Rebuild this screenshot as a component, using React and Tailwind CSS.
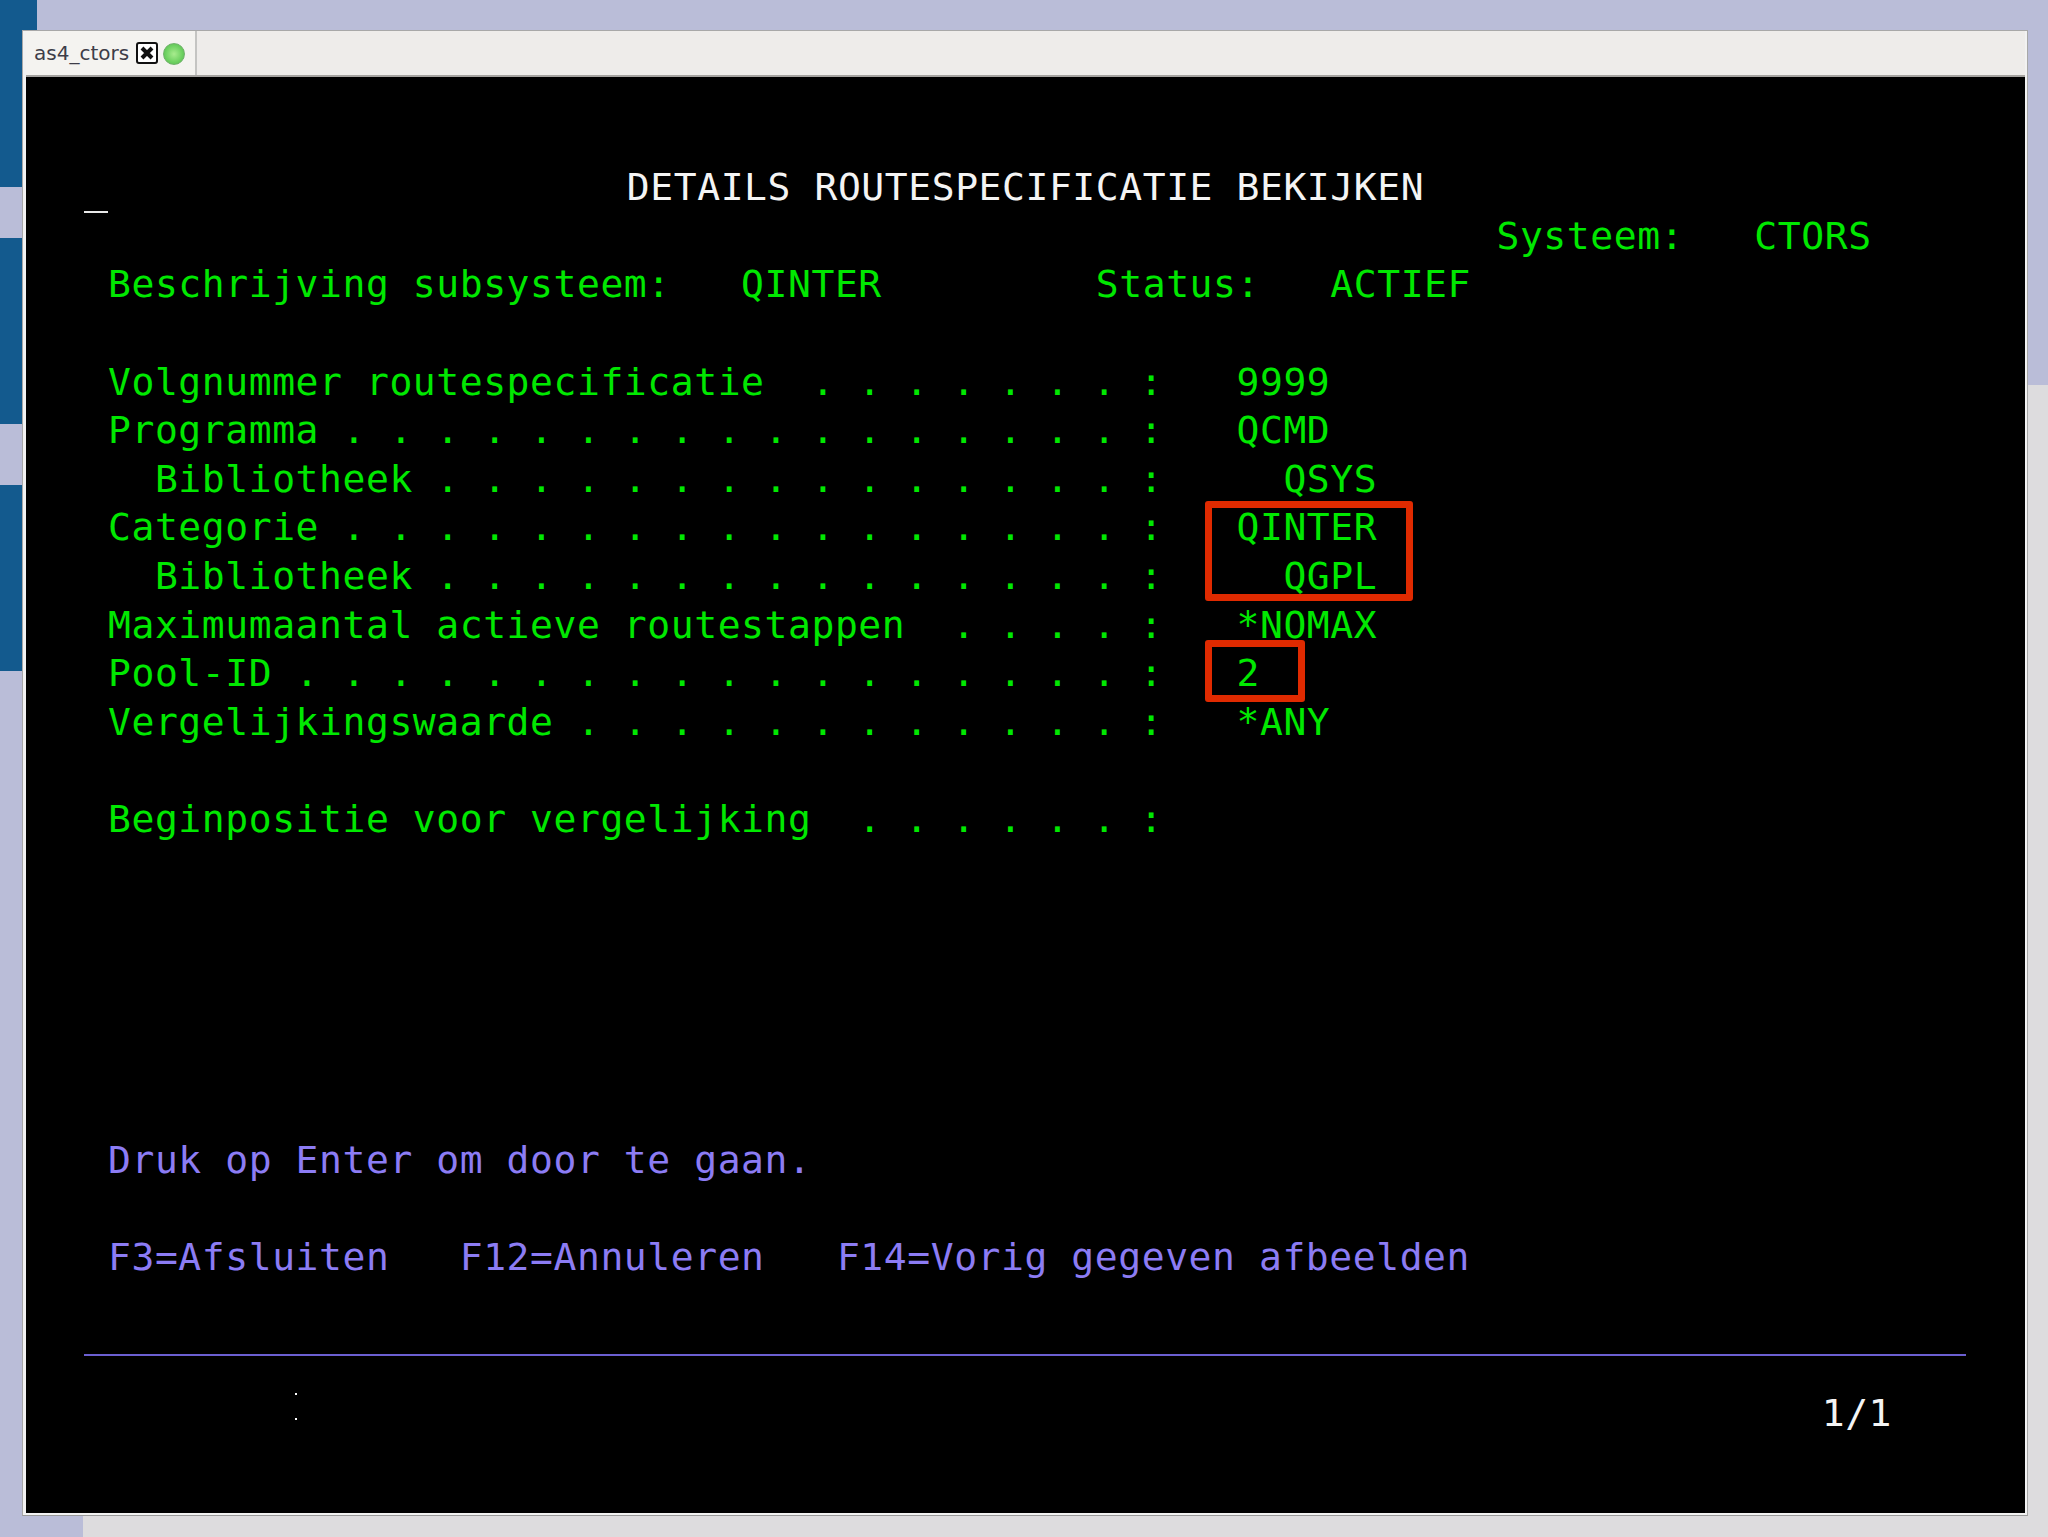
import React from 'react';

const green = 'text-[#00e800]';
const violet = 'text-[#8c7cf4]';
const value = 'ml-[3px]';

// the terminal is a character grid, so spaces do the columns
const rows = [
    { text: '                      ', tail: 'DETAILS ROUTESPECIFICATIE BEKIJKEN', shift: value, color: 'text-[#f4f4f4]' },
    { text: '                                                           ', tail: 'Systeem:   CTORS', shift: 'ml-[5px]', color: green },
    { text: 'Beschrijving subsysteem:   QINTER         ', tail: 'Status:   ACTIEF', shift: value, color: green },
    { text: '' },
    { text: 'Volgnummer routespecificatie  . . . . . . . :   ', tail: '9999', shift: value, color: green },
    { text: 'Programma . . . . . . . . . . . . . . . . . :   ', tail: 'QCMD', shift: value, color: green },
    { text: '  Bibliotheek . . . . . . . . . . . . . . . :     ', tail: 'QSYS', shift: value, color: green },
    { text: 'Categorie . . . . . . . . . . . . . . . . . :   ', tail: 'QINTER', shift: value, color: green },
    { text: '  Bibliotheek . . . . . . . . . . . . . . . :     ', tail: 'QGPL', shift: value, color: green },
    { text: 'Maximumaantal actieve routestappen  . . . . :   ', tail: '*NOMAX', shift: value, color: green },
    { text: 'Pool-ID . . . . . . . . . . . . . . . . . . :   ', tail: '2', shift: value, color: green },
    { text: 'Vergelijkingswaarde . . . . . . . . . . . . :   ', tail: '*ANY', shift: value, color: green },
    { text: '' },
    { text: 'Beginpositie voor vergelijking  . . . . . . :', color: green },
    { text: '' },
    { text: '' },
    { text: '' },
    { text: '' },
    { text: '' },
    { text: '' },
    { text: 'Druk op Enter om door te gaan.', color: violet },
    { text: '' },
    { text: 'F3=Afsluiten   F12=Annuleren   ', tail: 'F14=Vorig gegeven afbeelden', shift: 'ml-[2px]', color: violet },
];

const CloseIcon = () => (
    <svg width="22" height="22" viewBox="0 0 22 22" className="shrink-0">
        <rect x="1" y="1" width="20" height="20" rx="2" fill="#fff" stroke="#111" strokeWidth="2" />
        <path d="M6 6 L16 16 M16 6 L6 16" stroke="#111" strokeWidth="4" />
    </svg>
);

const App = () => {
    return (
        <div className="relative h-[1537px] w-[2048px] overflow-hidden bg-[#babdd8] pl-[22px] pt-[30px]">
            {/* desktop behind the window */}
            <div className="absolute inset-0 flex">
                <div className="flex w-[37px] shrink-0 flex-col">
                    <div className="h-[187px] bg-[#135a8e]"></div>
                    <div className="mt-[51px] h-[186px] bg-[#135a8e]"></div>
                    <div className="mt-[61px] h-[186px] bg-[#135a8e]"></div>
                </div>
                <div className="ml-[46px] mt-auto h-[21px] flex-1 bg-[#dddcde]"></div>
                <div className="mt-[385px] w-[20px] bg-[#dddcde]"></div>
            </div>

            {/* session window */}
            <div className="relative flex h-[1486px] w-[2006px] flex-col border border-[#a8a8a8] border-b-[#9a9a9a] bg-[#f2f2f2] pb-[2px] pl-[3px] pr-[2px]">
                <div className="flex h-[46px] shrink-0 border-b-2 border-[#a5a3a0] bg-[#eeecea]">
                    <div className="flex w-[171px] items-center border-r-2 border-[#c4c4c2] bg-[#f4f3f0] pb-[1px] pl-[8px]">
                        <span className="font-['DejaVu_Sans',sans-serif] text-[20px] text-[#3d3d48]">as4_ctors</span>
                        <span className="ml-[7px]"><CloseIcon /></span>
                        <span className="ml-[5px] mt-[3px] h-[22px] w-[22px] rounded-full border border-[#6fb26a] bg-[radial-gradient(circle,#a8ec8e_0%,#6cd060_60%,#55b44e_100%)]"></span>
                    </div>
                </div>

                <div className="relative flex-1 bg-black pl-[82px] pt-[86px] font-['DejaVu_Sans_Mono',monospace] text-[38px] tracking-[0.57px]">
                    {rows.map((row, i) => (
                        <div key={i} className={`h-[48.65px] whitespace-pre leading-[48.65px] ${row.color || ''}`}>
                            {row.text}
                            {row.tail && <span className={row.shift}>{row.tail}</span>}
                        </div>
                    ))}

                    <div className="-ml-[24px] mr-[59px] mt-[72px] h-[2px] bg-[#6b5fd0]"></div>

                    <div className="mt-[33px] h-[48.65px] whitespace-pre pl-[2px] leading-[48.65px] text-[#f4f4f4]">
                        {'                                                                         1/1'}
                    </div>

                    {/* cursor */}
                    <div className="absolute left-[58px] top-[134px] h-[2px] w-[24px] bg-[#e8e8e8]"></div>

                    {/* red annotation boxes */}
                    <div className="absolute left-[1179px] top-[424px] h-[100px] w-[208px] rounded-[3px] border-[7px] border-[#e02a00]"></div>
                    <div className="absolute left-[1179px] top-[563px] h-[62px] w-[100px] rounded-[3px] border-[7px] border-[#e02a00]"></div>

                    {/* stray pixels in the capture */}
                    <div className="absolute left-[269px] top-[1316px] h-[2px] w-[2px] bg-white"></div>
                    <div className="absolute left-[269px] top-[1341px] h-[2px] w-[2px] bg-white"></div>
                </div>
            </div>
        </div>
    );
};

export default App;
